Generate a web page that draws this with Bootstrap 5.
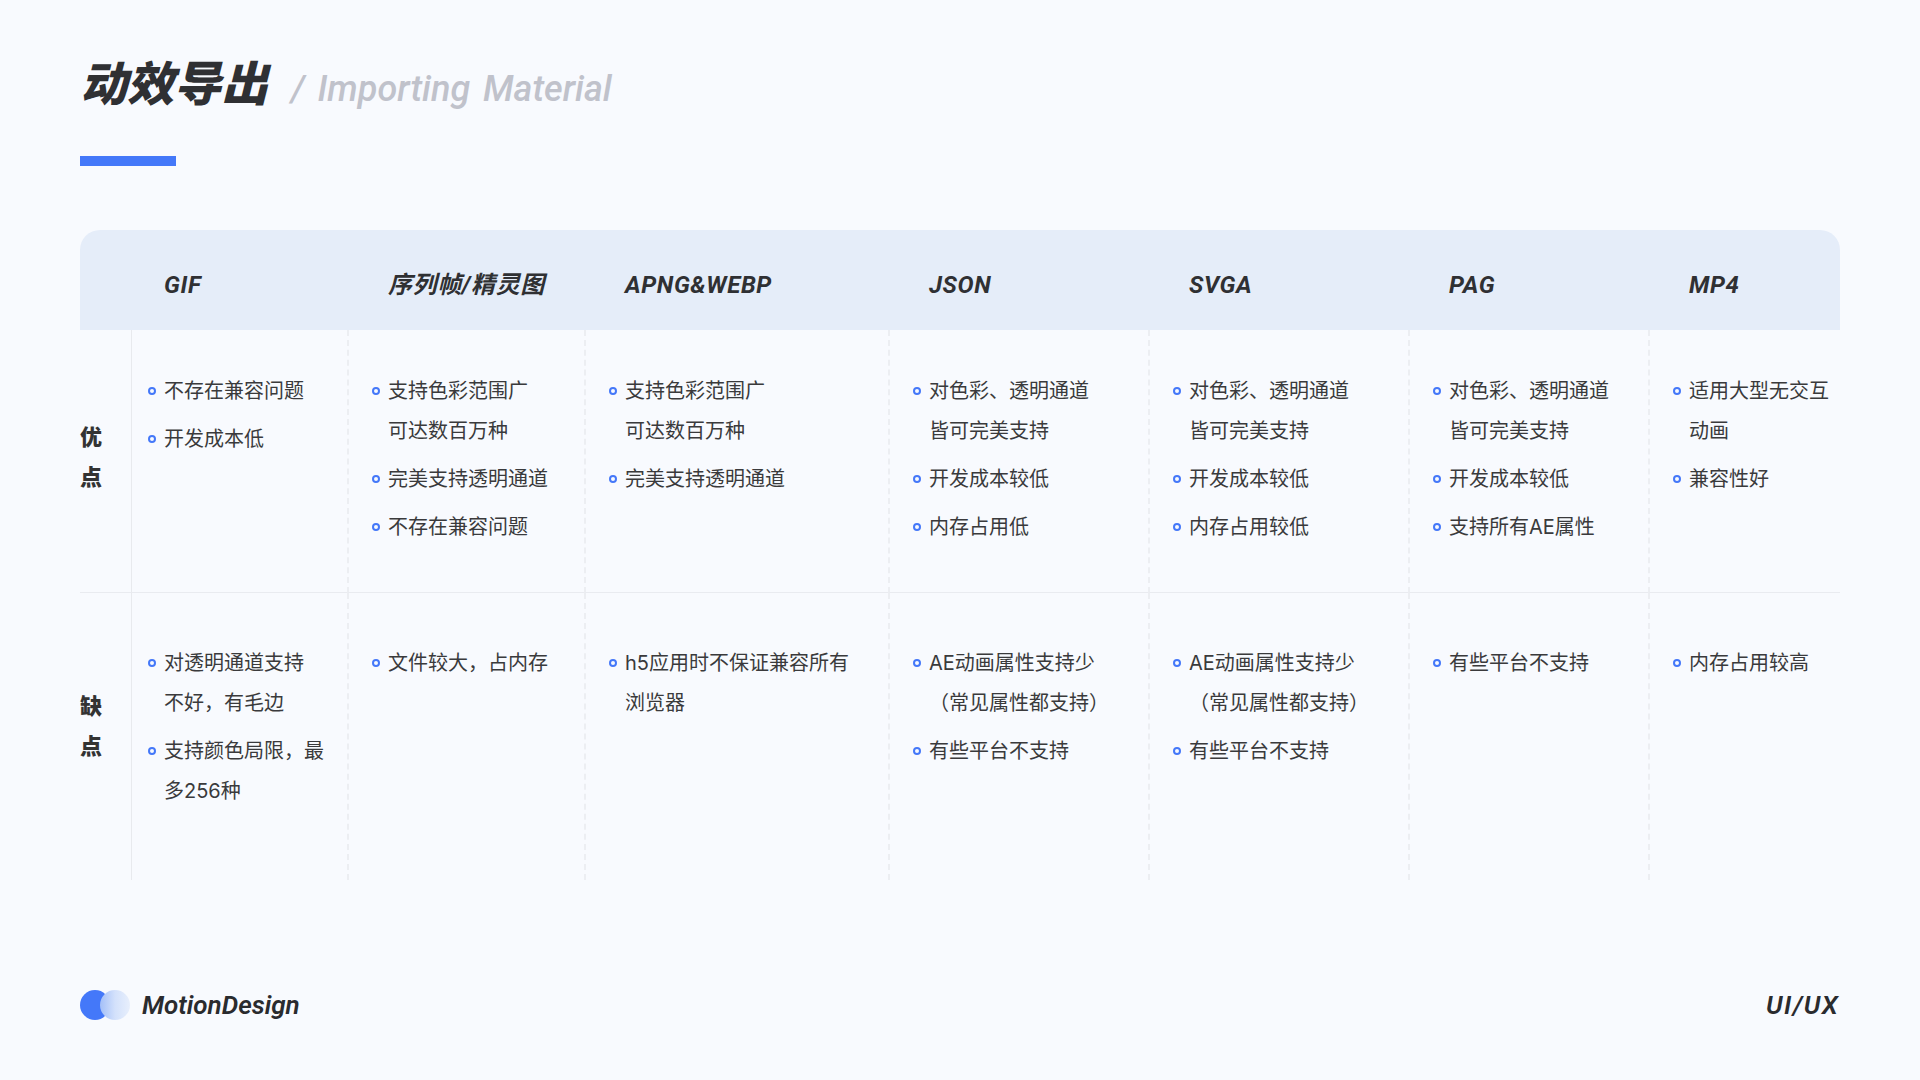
<!DOCTYPE html>
<html lang="zh-CN">
<head>
<meta charset="utf-8">
<title>动效导出</title>
<link href="https://cdn.jsdelivr.net/npm/bootstrap@5.3.0/dist/css/bootstrap.min.css" rel="stylesheet">
<style>
html,body{height:100%}
body{background:#f8fafe;color:#3a3a3c;font-family:"Inter","Noto Sans CJK SC",sans-serif;font-size:20px;line-height:40px}
.slide{width:1920px;height:1080px;padding:0 80px 60px}
.display-font{font-family:"Roboto","Noto Sans CJK SC",sans-serif;font-style:italic;color:#2f3033}
.head-title{font-size:47px;line-height:66px;font-weight:900;margin:52px 0 0}
.head-sub{font-family:"Roboto",sans-serif;font-size:36px;font-weight:500;color:#c0c2cb;margin-left:23px;word-spacing:4px}
.head-bar{width:96px;height:10px;background:#4478f9;margin-top:34px}
.matrix{width:1760px;table-layout:fixed;border-collapse:separate;border-spacing:0;margin:64px 0 0;--bs-table-bg:transparent;--bs-table-color:#3a3a3c}
.matrix>thead>tr>th{background:#e5edf9;height:100px;padding:9px 0 0 41px;font-size:24px;line-height:32px;font-weight:700;letter-spacing:.6px;border:0;vertical-align:middle}
.matrix>thead>tr>th:first-child{border-top-left-radius:20px}
.matrix>thead>tr>th:last-child{border-top-right-radius:20px}
.matrix>thead>tr>th.first-col{padding-left:33px}
.matrix>tbody>tr>*{padding:0 0 0 23px;border-width:0 0 0 2px;border-style:dashed;border-color:#eceef2;vertical-align:top;box-shadow:none}
.matrix>tbody>tr>th{padding:0;border:0;font-weight:900;font-size:22px;line-height:40px;vertical-align:middle;color:#333}
.matrix>tbody>tr>td.first-col{border-left:1px solid #e8eaee;padding-left:16px}
.row-good>*{height:263px;border-bottom:1px solid #e9ebf0!important}
.row-good>td{padding-top:41px!important}
.row-good>th{padding-bottom:8px!important}
.row-bad>*{height:287px}
.row-bad>td{padding-top:50px!important}
.row-bad>th{padding-bottom:22px!important}
.point{display:flex;gap:8px;margin-bottom:8px;white-space:nowrap}
.point::before{content:"";flex:none;width:8px;height:8px;margin-top:16px;border:2px solid #4478f9;border-radius:50%}
.paren{font-family:"Inter","Noto Sans CJK TC",sans-serif}
.brand-mark{display:flex;width:50px;height:30px}
.dot-a,.dot-b{flex:none;width:30px;height:30px;border-radius:50%}
.dot-a{background:#4478f9}
.dot-b{margin-left:-10px;background:linear-gradient(90deg,#a3bff8,#d3e1fb 50%,#e8effc)}
.foot-text{font-size:26px;line-height:30px;font-weight:600;color:#2a2b2e}
.foot-right{letter-spacing:1.4px;padding-right:1px}
</style>
</head>
<body>
<div class="slide d-flex flex-column">
  <h1 class="head-title display-font">动效导出<span class="head-sub">/ Importing Material</span></h1>
  <div class="head-bar"></div>
  <table class="table matrix">
    <colgroup>
      <col style="width:51px"><col style="width:216px"><col style="width:237px"><col style="width:304px"><col style="width:260px"><col style="width:260px"><col style="width:240px"><col style="width:192px">
    </colgroup>
    <thead>
      <tr class="display-font">
        <th></th><th class="first-col">GIF</th><th>序列帧/精灵图</th><th>APNG&amp;WEBP</th><th>JSON</th><th>SVGA</th><th>PAG</th><th>MP4</th>
      </tr>
    </thead>
    <tbody>
      <tr class="row-good">
        <th>优<br>点</th>
        <td class="first-col"><ul class="list-unstyled m-0"><li class="point"><span>不存在兼容问题</span></li><li class="point"><span>开发成本低</span></li></ul></td>
        <td><ul class="list-unstyled m-0"><li class="point"><span>支持色彩范围广<br>可达数百万种</span></li><li class="point"><span>完美支持透明通道</span></li><li class="point"><span>不存在兼容问题</span></li></ul></td>
        <td><ul class="list-unstyled m-0"><li class="point"><span>支持色彩范围广<br>可达数百万种</span></li><li class="point"><span>完美支持透明通道</span></li></ul></td>
        <td><ul class="list-unstyled m-0"><li class="point"><span>对色彩、透明通道<br>皆可完美支持</span></li><li class="point"><span>开发成本较低</span></li><li class="point"><span>内存占用低</span></li></ul></td>
        <td><ul class="list-unstyled m-0"><li class="point"><span>对色彩、透明通道<br>皆可完美支持</span></li><li class="point"><span>开发成本较低</span></li><li class="point"><span>内存占用较低</span></li></ul></td>
        <td><ul class="list-unstyled m-0"><li class="point"><span>对色彩、透明通道<br>皆可完美支持</span></li><li class="point"><span>开发成本较低</span></li><li class="point"><span>支持所有AE属性</span></li></ul></td>
        <td><ul class="list-unstyled m-0"><li class="point"><span>适用大型无交互<br>动画</span></li><li class="point"><span>兼容性好</span></li></ul></td>
      </tr>
      <tr class="row-bad">
        <th>缺<br>点</th>
        <td class="first-col"><ul class="list-unstyled m-0"><li class="point"><span>对透明通道支持<br>不好，有毛边</span></li><li class="point"><span>支持颜色局限，最<br>多256种</span></li></ul></td>
        <td><ul class="list-unstyled m-0"><li class="point"><span>文件较大，占内存</span></li></ul></td>
        <td><ul class="list-unstyled m-0"><li class="point"><span>h5应用时不保证兼容所有<br>浏览器</span></li></ul></td>
        <td><ul class="list-unstyled m-0"><li class="point"><span>AE动画属性支持少<br><span class="paren">（</span>常见属性都支持<span class="paren">）</span></span></li><li class="point"><span>有些平台不支持</span></li></ul></td>
        <td><ul class="list-unstyled m-0"><li class="point"><span>AE动画属性支持少<br><span class="paren">（</span>常见属性都支持<span class="paren">）</span></span></li><li class="point"><span>有些平台不支持</span></li></ul></td>
        <td><ul class="list-unstyled m-0"><li class="point"><span>有些平台不支持</span></li></ul></td>
        <td><ul class="list-unstyled m-0"><li class="point"><span>内存占用较高</span></li></ul></td>
      </tr>
    </tbody>
  </table>
  <footer class="d-flex justify-content-between align-items-center mt-auto">
    <div class="d-flex align-items-center gap-2">
      <div class="brand-mark me-1"><span class="dot-a"></span><span class="dot-b"></span></div>
      <span class="foot-text display-font">MotionDesign</span>
    </div>
    <span class="foot-text foot-right display-font">UI/UX</span>
  </footer>
</div>
<script src="https://cdn.jsdelivr.net/npm/bootstrap@5.3.0/dist/js/bootstrap.bundle.min.js"></script>
</body>
</html>
